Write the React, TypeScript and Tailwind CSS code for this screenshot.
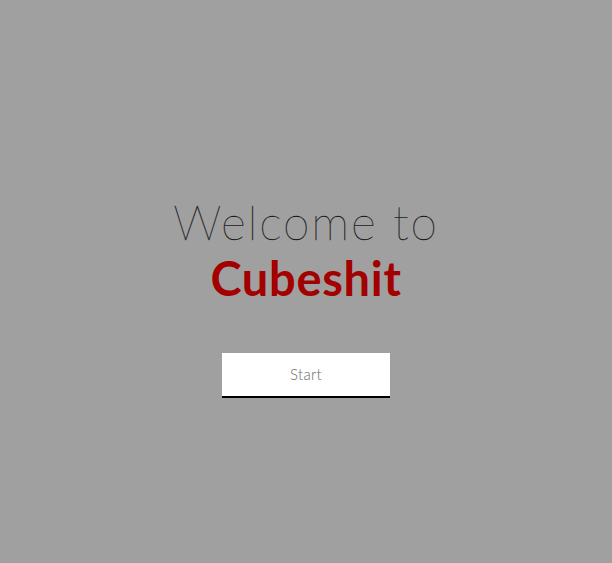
export default function App() {
  return (
    <div className="flex h-[563px] w-[612px] flex-col items-center bg-[#a0a0a0] font-['Lato','Noto_Sans',sans-serif]">
      <h1 className="mt-[194px] text-center text-[48px] leading-[56px] text-[#1a1a1a]">
        <span className="font-thin tracking-[1.8px] [-webkit-text-stroke:0.3px_#1a1a1a]">Welcome to</span>
        <br />
        <span className="text-[47px] font-bold tracking-[0.7px] text-[#a30000]">Cubeshit</span>
      </h1>
      <button className="mt-[47px] h-[45px] w-[168px] border-b-2 border-black bg-white text-[15px] font-light tracking-[0.3px] text-[#6b6b6b]">
        Start
      </button>
    </div>
  );
}
